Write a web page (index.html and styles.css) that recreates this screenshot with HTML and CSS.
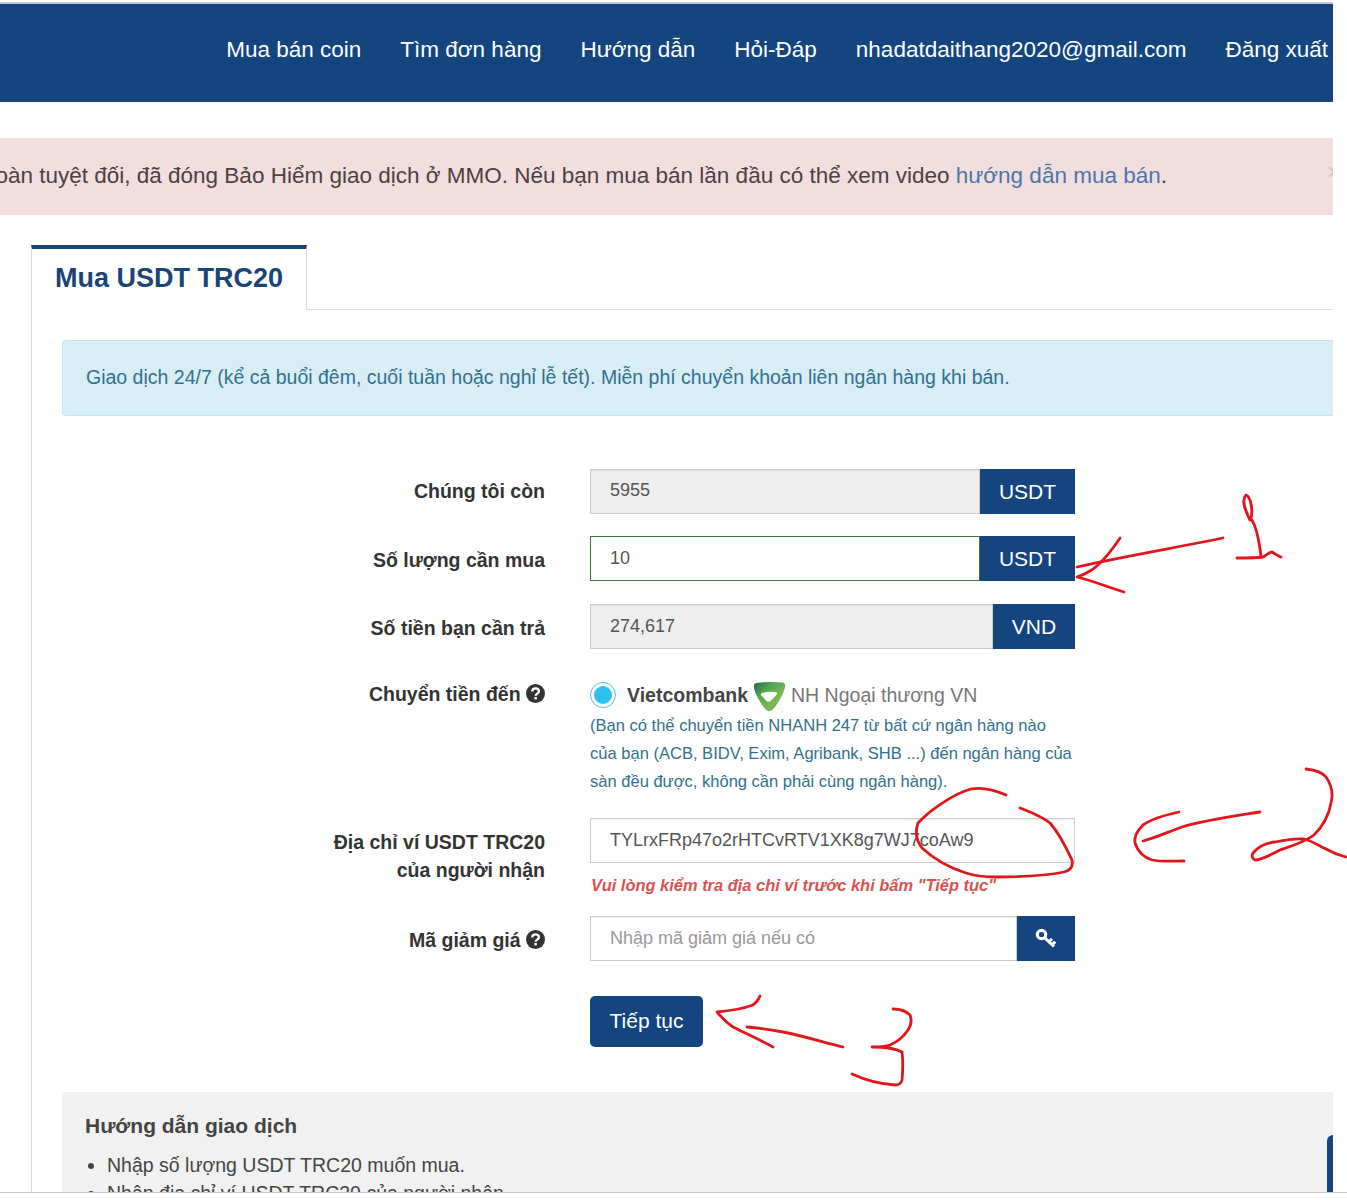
FILE: index.html
```html
<!DOCTYPE html>
<html lang="vi">
<head>
<meta charset="utf-8">
<title>Mua USDT TRC20</title>
<link rel="stylesheet" href="styles.css">
</head>
<body>
<div class="page">
  <div class="main">
    <header class="topbar">
      <nav class="nav">
        <a>Mua bán coin</a>
        <a>Tìm đơn hàng</a>
        <a>Hướng dẫn</a>
        <a>Hỏi-Đáp</a>
        <a>nhadatdaithang2020@gmail.com</a>
        <a>Đăng xuất</a>
      </nav>
    </header>
    <div class="alert">
      <p class="alert-text">Sàn giao dịch an toàn tuyệt đối, đã đóng Bảo Hiểm giao dịch ở MMO. Nếu bạn mua bán lần đầu có thể xem video <a>hướng dẫn mua bán</a>.</p>
      <span class="alert-close">×</span>
    </div>
    <section class="panel">
      <div class="tabs"><h1 class="tab">Mua USDT TRC20</h1></div>
      <div class="panel-body">
        <div class="info">Giao dịch 24/7 (kể cả buổi đêm, cuối tuần hoặc nghỉ lễ tết). Miễn phí chuyển khoản liên ngân hàng khi bán.</div>
        <form class="form">
          <div class="row row-a">
            <label class="label">Chúng tôi còn</label>
            <div class="group"><input class="field field-ro field-up" value="5955" readonly><span class="addon addon-usdt">USDT</span></div>
          </div>
          <div class="row row-b">
            <label class="label label-low">Số lượng cần mua</label>
            <div class="group"><input class="field field-ok" value="10"><span class="addon addon-usdt">USDT</span></div>
          </div>
          <div class="row row-c">
            <label class="label label-low">Số tiền bạn cần trả</label>
            <div class="group"><input class="field field-ro" value="274,617" readonly><span class="addon addon-vnd">VND</span></div>
          </div>
          <div class="row row-d">
            <label class="label label-top">Chuyển tiền đến
              <svg class="help" viewBox="0 0 18 18"><circle cx="9" cy="9" r="9" fill="#333"/><path d="M5.9 7.1c0-2 1.400-3 3.200-3 1.800 0 3.100 1 3.100 2.700 0 2.300-3 2.300-3 4.300" fill="none" stroke="#fff" stroke-width="2.200"/><rect x="7.900" y="12.300" width="2.400" height="2.300" fill="#fff"/></svg>
            </label>
            <div class="control">
              <div class="bank">
                <span class="radio"><span class="radio-dot"></span></span>
                <b class="bank-name">Vietcombank</b>
                <svg class="bank-logo" viewBox="0 0 34 32">
                  <defs><linearGradient id="vcb" x1="0" y1="0" x2="1" y2="1"><stop offset="0" stop-color="#1f6b4a"/><stop offset=".35" stop-color="#5aa656"/><stop offset=".7" stop-color="#7dbb52"/><stop offset="1" stop-color="#14664f"/></linearGradient></defs>
                  <path d="M1 3Q3 1 8 1Q20 0 31 1Q34 2 33 6Q30 17 22 27Q17 33 13 29Q4 18 1 7Z" fill="url(#vcb)"/>
                  <path d="M9 12Q16 10 24 11Q26 12 24 14Q21 18 18 20Q16 22 14 20Q11 17 8 14Q8 13 9 12Z" fill="#fff"/>
                </svg>
                <span class="bank-desc">NH Ngoại thương VN</span>
              </div>
              <p class="note">(Bạn có thể chuyển tiền NHANH 247 từ bất cứ ngân hàng nào của bạn (ACB, BIDV, Exim, Agribank, SHB ...) đến ngân hàng của sàn đều được, không cần phải cùng ngân hàng).</p>
            </div>
          </div>
          <div class="row row-e">
            <label class="label label-two">Địa chỉ ví USDT TRC20<br>của người nhận</label>
            <div class="control">
              <div class="group"><input class="field" value="TYLrxFRp47o2rHTCvRTV1XK8g7WJ7coAw9"></div>
              <p class="warn">Vui lòng kiểm tra địa chỉ ví trước khi bấm "Tiếp tục"</p>
            </div>
          </div>
          <div class="row row-f">
            <label class="label label-low">Mã giảm giá
              <svg class="help" viewBox="0 0 18 18"><circle cx="9" cy="9" r="9" fill="#333"/><path d="M5.9 7.1c0-2 1.400-3 3.200-3 1.800 0 3.100 1 3.100 2.700 0 2.300-3 2.300-3 4.300" fill="none" stroke="#fff" stroke-width="2.200"/><rect x="7.900" y="12.300" width="2.400" height="2.300" fill="#fff"/></svg>
            </label>
            <div class="group">
              <input class="field" placeholder="Nhập mã giảm giá nếu có">
              <span class="addon addon-key">
                <svg class="key" viewBox="0 0 22 22"><circle cx="6.500" cy="6.500" r="4.200" fill="none" stroke="#fff" stroke-width="3.200"/><path d="M9.800 9.800L19 18.500M14 13.800l3-3M17.200 16.800l3-3" fill="none" stroke="#fff" stroke-width="3"/></svg>
              </span>
            </div>
          </div>
          <div class="row row-g">
            <span class="label"></span>
            <button type="button" class="submit">Tiếp tục</button>
          </div>
        </form>
        <div class="guide">
          <h2 class="guide-title">Hướng dẫn giao dịch</h2>
          <ul class="guide-list">
            <li>Nhập số lượng USDT TRC20 muốn mua.</li>
            <li>Nhập địa chỉ ví USDT TRC20 của người nhận</li>
          </ul>
        </div>
      </div>
    </section>
  </div>
  <span class="chat-tab"></span>
  <svg class="ink" viewBox="0 0 1347 1192" fill="none" stroke="#e0161c" stroke-width="2.800" stroke-linecap="round" stroke-linejoin="round">
    <path d="M1223 538C1180 547 1125 556 1077 567"/>
    <path d="M1120 538C1112 550 1100 565 1090 571C1085 574 1080 576 1077 577C1090 580 1105 586 1124 592"/>
    <path d="M1250 520C1245 510 1241 500 1246 495C1251 497 1253 510 1251 519C1256 525 1259 540 1261 556"/>
    <path d="M1237 558C1245 558 1255 558 1263 557C1267 555 1269 552 1272 552C1275 554 1278 556 1281 557"/>
    <path d="M1006 795C995 790 982 787 971 789C955 793 930 810 918 823C914 835 918 843 922 848C935 860 950 868 966 873C978 877 988 877 996 877C1020 877 1050 875 1064 872C1072 870 1073 865 1072 860C1065 845 1058 832 1050 823C1040 815 1030 812 1020 808"/>
    <path d="M1260 812C1235 816 1205 820 1182 827C1168 832 1155 838 1143 841"/>
    <path d="M1179 812C1165 815 1150 820 1143 825C1136 832 1134 838 1135 843C1138 852 1145 858 1152 860C1162 862 1175 861 1184 861"/>
    <path d="M1306 769C1315 770 1323 773 1326 777C1333 787 1333 795 1331 803C1329 815 1322 827 1314 835C1305 842 1292 846 1280 850C1270 855 1262 860 1255 860C1251 858 1252 855 1253 853C1258 847 1266 843 1275 842C1285 840 1295 838 1304 839C1312 841 1318 845 1324 848C1331 852 1338 855 1346 857"/>
    <path d="M760 996C758 1001 756 1003 753 1005C742 1009 728 1011 717 1012C722 1018 727 1023 733 1027C745 1033 760 1040 773 1047"/>
    <path d="M747 1027C760 1028 772 1030 783 1032C803 1036 823 1042 843 1047"/>
    <path d="M893 1009C900 1009 906 1011 910 1015C912 1021 911 1026 908 1030C904 1036 897 1042 890 1045C884 1047 878 1047 872 1047C882 1047 895 1048 902 1052C903 1060 903 1070 902 1080C901 1084 898 1085 895 1085C880 1084 865 1080 852 1074"/>
  </svg>
</div>
</body>
</html>
```
FILE: styles.css
```css
* { box-sizing: border-box; }
html, body { margin: 0; background: #fff; }
body { font-family: "Liberation Sans", Arial, sans-serif; color: #333; }

.page {
  position: relative;
  height: 1193px;
  padding-top: 2px;
  overflow: hidden;
  border-bottom: 1px solid #c9c9c9;
}
.main { width: 1333px; overflow: hidden; }

.topbar {
  height: 100px;
  background: #14457f;
  border-top: 2px solid #b9cdd8;
  display: flex;
  justify-content: flex-end;
  padding: 0 5px 6px 0;
}
.nav { display: flex; align-items: center; gap: 39px; }
.nav a { color: #fff; font-size: 22.500px; white-space: nowrap; }

.alert {
  margin-top: 36px;
  height: 77px;
  background: #f2dede;
  position: relative;
  display: flex;
  align-items: center;
  justify-content: flex-end;
  padding: 0 166px 2px 0;
  overflow: hidden;
}
.alert-text { margin: 0; flex: none; white-space: nowrap; font-size: 22.500px; color: #4a4240; }
.alert-text a { color: #4a76a8; }
.alert-close { position: absolute; right: -8px; top: 20px; font-size: 24px; color: #d8c4c4; }

.panel { margin: 30px 0 0 31px; border-left: 1px solid #ddd; }
.tabs { height: 65px; border-bottom: 1px solid #ddd; margin-left: -1px; }
.tab {
  margin: 0;
  width: 276px;
  height: 65px;
  background: #fff;
  border-top: 4px solid #14457f;
  border-left: 1px solid #ddd;
  border-right: 1px solid #ddd;
  padding: 14px 0 0 23px;
  font-size: 27px;
  line-height: 31px;
  color: #1a4478;
  white-space: nowrap;
}
.panel-body { padding: 30px 0 0 30px; }

.info {
  height: 76px;
  background: #d9edf7;
  border: 1px solid #bce8f1;
  border-right: 0;
  border-radius: 4px 0 0 4px;
  padding: 0 0 2px 23px;
  display: flex;
  align-items: center;
  font-size: 19.500px;
  color: #31708f;
  white-space: nowrap;
}

.form { padding-top: 53px; }
.row { display: flex; align-items: center; }
.row-b { margin-top: 22px; }
.row-c { margin-top: 23px; }
.row-d { margin-top: 30px; align-items: flex-start; }
.row-e { margin-top: 22px; align-items: flex-start; }
.row-f { margin-top: 21px; }
.row-g { margin-top: 35px; }

.label {
  flex: none;
  width: 483px;
  margin-right: 45px;
  text-align: right;
  font-size: 19.500px;
  font-weight: 700;
  color: #333;
  white-space: nowrap;
}
.label-low { padding-top: 3px; }
.label-top { padding-top: 3px; line-height: 24px; }
.label-two { line-height: 28px; padding-top: 10px; }
.help { width: 19px; height: 19px; vertical-align: -2px; }

.group { display: flex; width: 485px; height: 45px; }
.control { width: 485px; }
.field {
  flex: 1;
  min-width: 0;
  height: 45px;
  border: 1px solid #ccc;
  background: #fff;
  padding: 0 19px;
  font-family: "Liberation Sans", Arial, sans-serif;
  font-size: 18px;
  color: #555;
  outline: none;
  box-shadow: inset 0 1px 1px rgba(0,0,0,.075);
}
.field::placeholder { color: #999; opacity: 1; }
.field-ro { background: #eee; }
.field-up { padding-bottom: 2px; }
.field-ok { border-color: #3c763d; box-shadow: none; }

.addon {
  flex: none;
  height: 45px;
  background: #14457f;
  color: #fff;
  font-size: 21px;
  display: flex;
  align-items: center;
  justify-content: center;
}
.addon-usdt { width: 95px; }
.addon-vnd { width: 82px; }
.addon-key { width: 58px; }
.key { width: 22px; height: 22px; }

.bank { display: flex; align-items: center; height: 32px; }
.radio {
  width: 26px;
  height: 26px;
  border-radius: 50%;
  border: 1px solid #4fc3dc;
  display: flex;
  align-items: center;
  justify-content: center;
  margin-right: 11px;
  background: #fff;
}
.radio-dot { width: 18px; height: 18px; border-radius: 50%; background: #2cc1f1; }
.bank-name { font-size: 19.500px; color: #444; }
.bank-logo { width: 33px; height: 32px; margin: 3px 5px 0; flex: none; }
.bank-desc { font-size: 19.500px; color: #777; white-space: nowrap; }
.note { margin: 0; font-size: 16.550px; line-height: 28px; color: #31708f; padding-top: 1px; }

.warn { margin: 13px 0 0 1px; font-size: 16.450px; font-weight: 700; font-style: italic; color: #d9534f; white-space: nowrap; }

.submit {
  width: 113px;
  height: 51px;
  padding: 0 0 2px;
  background: #14457f;
  border: 0;
  border-radius: 5px;
  color: #fff;
  font-family: "Liberation Sans", Arial, sans-serif;
  font-size: 21px;
}

.guide {
  margin-top: 45px;
  height: 120px;
  background: #f1f1f1;
  border-radius: 4px 0 0 0;
  padding: 22px 0 0 23px;
}
.guide-title { margin: 0; font-size: 21px; line-height: 24px; font-weight: 700; color: #444; }
.guide-list { margin: 13px 0 0; padding: 0 0 0 22px; font-size: 19.500px; line-height: 28px; color: #444; }

.chat-tab {
  position: absolute;
  left: 1327px;
  top: 1135px;
  width: 6px;
  height: 57px;
  background: #14457f;
  border-radius: 6px 0 0 0;
}
.ink { position: absolute; left: 0; top: 0; width: 1347px; height: 1192px; pointer-events: none; }
```
